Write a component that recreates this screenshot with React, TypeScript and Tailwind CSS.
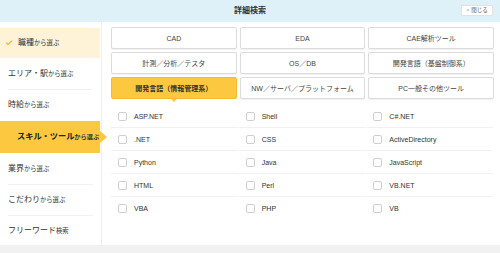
import { Check } from 'lucide-react'

const menu = [
  { main: '職種', sub: 'から選ぶ', state: 'checked' },
  { main: 'エリア・駅', sub: 'から選ぶ', state: '' },
  { main: '時給', sub: 'から選ぶ', state: '' },
  { main: 'スキル・ツール', sub: 'から選ぶ', state: 'active' },
  { main: '業界', sub: 'から選ぶ', state: '' },
  { main: 'こだわり', sub: 'から選ぶ', state: '' },
  { main: 'フリーワード', sub: '検索', state: '' },
]

// dividers show only under rows that touch no coloured row
const dividerAfter = [1, 4, 5]

const categories = [
  'CAD',
  'EDA',
  'CAE解析ツール',
  '計測／分析／テスタ',
  'OS／DB',
  '開発言語（基盤制御系）',
  '開発言語（情報管理系）',
  'NW／サーバ／プラットフォーム',
  'PC一般その他ツール',
]

const skills = [
  'ASP.NET', 'Shell', 'C#.NET',
  '.NET', 'CSS', 'ActiveDirectory',
  'Python', 'Java', 'JavaScript',
  'HTML', 'Perl', 'VB.NET',
  'VBA', 'PHP', 'VB',
]

export default function App() {
  return (
    <div
      className="w-[500px] h-[253px] bg-[#f1f1f1] text-[#333] overflow-hidden"
      style={{ fontFamily: '"Liberation Sans", "Noto Sans CJK JP", sans-serif' }}
    >
      <header className="relative h-[22px] bg-[#def0f8] flex items-center justify-center">
        <h1 className="text-[8px] font-bold leading-none">詳細検索</h1>
        <button className="absolute right-[7px] top-[5px] h-[11px] w-[32px] bg-white border border-[#e2e2e2] rounded-[1px] flex items-center justify-center gap-[2px] text-[5.5px] leading-none text-[#555]">
          <span className="text-[#aaa]">×</span>
          <span>閉じる</span>
        </button>
      </header>

      <div className="flex h-[223px] bg-white">
        <nav className="w-[102px] shrink-0 pt-[6px] border-r border-[#efefef]">
          {menu.map((m, i) => (
            <div key={m.main}>
              <div
                className={
                  m.state === 'checked'
                    ? 'h-[30px] flex items-center whitespace-nowrap pl-[5px] bg-[#fff3d7] mr-[1px]'
                    : m.state === 'active'
                    ? 'relative h-[32px] flex items-center whitespace-nowrap pl-[17px] bg-[#fbc83f] mr-[1px]'
                    : 'h-[30px] flex items-center whitespace-nowrap pl-[8px]'
                }
              >
                {m.state === 'checked' && (
                  <Check className="w-[8px] h-[8px] text-[#f4b52c] mr-[5px]" strokeWidth={3.5} />
                )}
                <span
                  className={
                    m.state === 'active'
                      ? 'text-[8.2px] font-bold leading-none text-[#222]'
                      : 'text-[8px] leading-none'
                  }
                >
                  {m.main}
                </span>
                <span
                  className={
                    m.state === 'active'
                      ? 'text-[6.2px] font-bold leading-none mt-[1px]'
                      : 'text-[6.3px] leading-none mt-[1px]'
                  }
                >
                  {m.sub}
                </span>
                {m.state === 'active' && (
                  <span className="absolute right-[-7px] top-[10px] w-0 h-0 border-y-[6px] border-y-transparent border-l-[7px] border-l-[#fbc83f]" />
                )}
              </div>
              {dividerAfter.includes(i) ? (
                <div className="mx-[8px] h-px bg-[#f0f0f0]" />
              ) : (
                <div className="h-px" />
              )}
            </div>
          ))}
        </nav>

        <main className="flex-1 pl-[9px] pr-[6px] pt-[5px]">
          <div className="grid grid-cols-3 gap-x-[3px] gap-y-[3px]">
            {categories.map((c) => {
              const on = c === '開発言語（情報管理系）'
              return (
                <div
                  key={c}
                  className={
                    on
                      ? 'relative h-[22px] rounded-[2px] bg-[#fbc83f] border border-[#f2bb33] flex items-center justify-center whitespace-nowrap text-[7px] font-bold leading-none text-[#333]'
                      : 'h-[22px] rounded-[2px] bg-white border border-[#dcdcdc] shadow-[0_1px_1px_rgba(0,0,0,0.06)] flex items-center justify-center whitespace-nowrap text-[7px] leading-none text-[#444]'
                  }
                >
                  {c}
                  {on && (
                    <span className="absolute bottom-[-4px] left-1/2 -translate-x-1/2 w-0 h-0 border-x-[3px] border-x-transparent border-t-[3px] border-t-[#fbc83f]" />
                  )}
                </div>
              )
            })}
          </div>

          <div className="grid grid-cols-3 gap-x-[1px] mt-[6px] mr-[1px]">
            {skills.map((s, i) => (
              <label
                key={s}
                className={
                  i < 12
                    ? 'h-[23px] flex items-center border-b border-[#f0f0f0] pl-[7px]'
                    : 'h-[23px] flex items-center pl-[7px]'
                }
              >
                <span className="w-[9px] h-[9px] border border-[#cfcfcf] rounded-[2px] bg-white shrink-0" />
                <span className="ml-[7px] text-[7px] leading-none text-[#333]">{s}</span>
              </label>
            ))}
          </div>
        </main>
      </div>
    </div>
  )
}
